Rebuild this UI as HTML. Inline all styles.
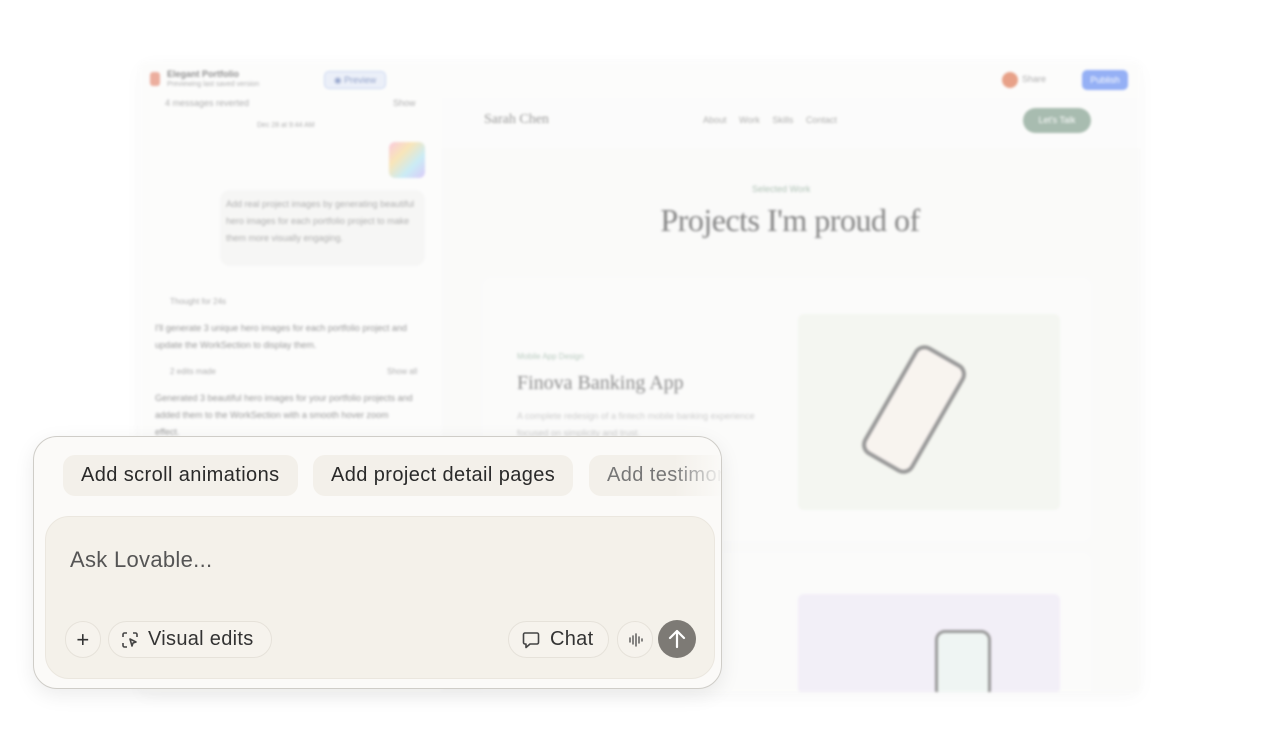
<!DOCTYPE html>
<html><head><meta charset="utf-8"><style>
*{box-sizing:border-box;margin:0;padding:0}
body{width:1280px;height:754px;background:#fff;position:relative;overflow:hidden;font-family:"Liberation Sans",sans-serif}
.app{position:absolute;left:140px;top:62px;width:1000px;height:630px;background:#fbfbfa;filter:blur(1.3px);opacity:.6;box-shadow:0 4px 20px rgba(0,0,0,.06);border-radius:6px;overflow:hidden}
.abs{position:absolute}
.t{font-size:9px;color:#777}
.serif{font-family:"Liberation Serif",serif}
.chat{position:absolute;left:33px;top:436px;width:689px;height:253px;background:#fbfaf8;border:1.5px solid #cfcdc8;border-radius:24px;box-shadow:0 6px 20px rgba(0,0,0,.08);overflow:hidden}
.chip{position:absolute;top:18px;height:41px;background:#f3f0ea;border-radius:12px;font-size:20px;color:#2a2a2a;line-height:41px;padding:0 18px;white-space:nowrap;letter-spacing:0.4px}
.inp{position:absolute;left:11px;top:79px;width:670px;height:163px;background:#f4f1ea;border:1px solid #ebe7df;border-radius:24px}
.btn{position:absolute;top:104px;height:37px;border:1px solid #e6e2da;border-radius:19px;background:#f6f3ed;font-size:20px;color:#333;line-height:35px;letter-spacing:0.3px}
</style></head><body>
<div class="app">
  <div class="abs" style="left:0;top:0;width:1000px;height:36px;background:#fbfbfa"></div>
  <div class="abs" style="left:10px;top:10px;width:10px;height:14px;background:#e07a5f;border-radius:3px"></div>
  <div class="abs t" style="left:27px;top:7px;font-weight:bold;color:#444">Elegant Portfolio</div>
  <div class="abs t" style="left:27px;top:19px;font-size:7px">Previewing last saved version</div>
  <div class="abs" style="left:184px;top:9px;width:62px;height:18px;background:#dfe6f5;border:1px solid #a9bde8;border-radius:5px;font-size:9px;color:#4a64a8;line-height:16px;text-align:center">◉ Preview</div>
  <div class="abs" style="left:862px;top:10px;width:16px;height:16px;background:#d9643a;border-radius:50%"></div>
  <div class="abs t" style="left:882px;top:12px">Share</div>
  <div class="abs" style="left:942px;top:8px;width:46px;height:20px;background:#4f7cf0;border-radius:5px;font-size:9px;color:#fff;line-height:20px;text-align:center">Publish</div>
  <div class="abs t" style="left:25px;top:36px">4 messages reverted</div>
  <div class="abs t" style="left:253px;top:36px">Show</div>
  <div class="abs t" style="left:117px;top:60px;font-size:7px">Dec 28 at 9:44 AM</div>
  <div class="abs" style="left:249px;top:80px;width:36px;height:36px;border-radius:6px;background:linear-gradient(135deg,#f7a8c8,#f5d58a,#a8e0f0,#c2a8f5)"></div>
  <div class="abs" style="left:80px;top:128px;width:205px;height:76px;background:#f1f1ef;border-radius:10px"></div>
  <div class="abs t" style="left:86px;top:134px;width:190px;line-height:17px">Add real project images by generating beautiful hero images for each portfolio project to make them more visually engaging.</div>
  <div class="abs t" style="left:30px;top:235px;font-size:8px">Thought for 24s</div>
  <div class="abs t" style="left:15px;top:258px;width:260px;line-height:17px;color:#555">I'll generate 3 unique hero images for each portfolio project and update the WorkSection to display them.</div>
  <div class="abs t" style="left:30px;top:305px;font-size:8px">2 edits made</div>
  <div class="abs t" style="left:247px;top:305px;font-size:8px">Show all</div>
  <div class="abs t" style="left:15px;top:328px;width:260px;line-height:17px;color:#555">Generated 3 beautiful hero images for your portfolio projects and added them to the WorkSection with a smooth hover zoom effect.</div>
  <div class="abs" style="left:302px;top:36px;width:698px;height:594px;background:#f7f7f6"></div>
  <div class="abs" style="left:302px;top:36px;width:698px;height:50px;background:#fafaf9"></div>
  <div class="abs serif" style="left:344px;top:50px;font-size:14px;color:#555">Sarah Chen</div>
  <div class="abs t" style="left:563px;top:53px">About&nbsp;&nbsp;&nbsp;&nbsp;&nbsp;Work&nbsp;&nbsp;&nbsp;&nbsp;&nbsp;Skills&nbsp;&nbsp;&nbsp;&nbsp;&nbsp;Contact</div>
  <div class="abs" style="left:883px;top:46px;width:68px;height:25px;background:#6f907c;border-radius:13px;font-size:9px;color:#fff;line-height:25px;text-align:center">Let's Talk</div>
  <div class="abs t" style="left:612px;top:122px;color:#7a9a85">Selected Work</div>
  <div class="abs serif" style="left:490px;top:140px;width:320px;text-align:center;font-size:32px;color:#333;letter-spacing:-0.5px">Projects I'm proud of</div>
  <div class="abs" style="left:342px;top:215px;width:610px;height:265px;background:#f9f9f8;border-radius:10px"></div>
  <div class="abs t" style="left:377px;top:290px;font-size:8px;color:#8aa895">Mobile App Design</div>
  <div class="abs serif" style="left:377px;top:310px;font-size:20px;color:#444">Finova Banking App</div>
  <div class="abs t" style="left:377px;top:346px;width:240px;line-height:17px;color:#aaa">A complete redesign of a fintech mobile banking experience focused on simplicity and trust.</div>
  <div class="abs" style="left:658px;top:252px;width:262px;height:196px;background:#eef1e8;border-radius:6px"></div>
  <div class="abs" style="left:745px;top:285px;width:58px;height:125px;border:4px solid #555;border-radius:12px;background:#f5ede6;transform:rotate(30deg)"></div>
  <div class="abs" style="left:342px;top:490px;width:610px;height:150px;background:#f9f9f8;border-radius:10px"></div>
  <div class="abs" style="left:658px;top:532px;width:262px;height:100px;background:#ebe5f3;border-radius:6px"></div>
  <div class="abs" style="left:795px;top:568px;width:56px;height:70px;border:3px solid #555;border-radius:10px;background:#e6f0ec"></div>
</div>

<div class="chat">
  <div class="chip" style="left:29px">Add scroll animations</div>
  <div class="chip" style="left:279px">Add project detail pages</div>
  <div class="chip" style="left:555px;color:#777;width:140px;overflow:hidden">Add testimonials</div>
  <div class="abs" style="left:640px;top:18px;width:50px;height:41px;background:linear-gradient(90deg,rgba(251,250,248,0),#fbfaf8)"></div>
  <div class="inp">
    <div class="abs" style="left:24px;top:30px;font-size:22px;color:#555;letter-spacing:0.3px">Ask Lovable...</div>
    <div class="btn" style="left:19px;width:36px;text-align:center;font-size:22px">+</div>
    <div class="btn" style="left:62px;width:164px;padding-left:39px">Visual edits
      <svg class="abs" style="left:12px;top:9px" width="18" height="18" viewBox="0 0 18 18" fill="none" stroke="#444" stroke-width="1.6"><path d="M2 6V3.5A1.5 1.5 0 0 1 3.5 2H6M12 2h2.5A1.5 1.5 0 0 1 16 3.5V6M2 12v2.5A1.5 1.5 0 0 0 3.5 16H6"/><path d="M9 8l6 3-3 1-1 3z" stroke-linejoin="round"/></svg>
    </div>
    <div class="btn" style="left:462px;width:101px;padding-left:41px">Chat
      <svg class="abs" style="left:12px;top:8px" width="20" height="20" viewBox="0 0 20 20" fill="none" stroke="#444" stroke-width="1.6"><path d="M4 3h12a1.5 1.5 0 0 1 1.5 1.5v8A1.5 1.5 0 0 1 16 14H9l-4 3.5V14H4a1.5 1.5 0 0 1-1.5-1.5v-8A1.5 1.5 0 0 1 4 3z" stroke-linejoin="round"/></svg>
    </div>
    <div class="btn" style="left:571px;width:36px">
      <svg class="abs" style="left:9px;top:9px" width="18" height="18" viewBox="0 0 18 18" stroke="#555" stroke-width="1.4" stroke-linecap="round"><path d="M3 7v4M6 5v8M9 3v12M12 6v6M15 8v2"/></svg>
    </div>
    <div class="abs" style="left:612px;top:103px;width:38px;height:38px;border-radius:50%;background:#7d7a75">
      <svg class="abs" style="left:9px;top:8px" width="20" height="22" viewBox="0 0 20 22" fill="none" stroke="#fff" stroke-width="2.2" stroke-linecap="round" stroke-linejoin="round"><path d="M10 19V3M3 10l7-7 7 7"/></svg>
    </div>
  </div>
</div>
</body></html>
